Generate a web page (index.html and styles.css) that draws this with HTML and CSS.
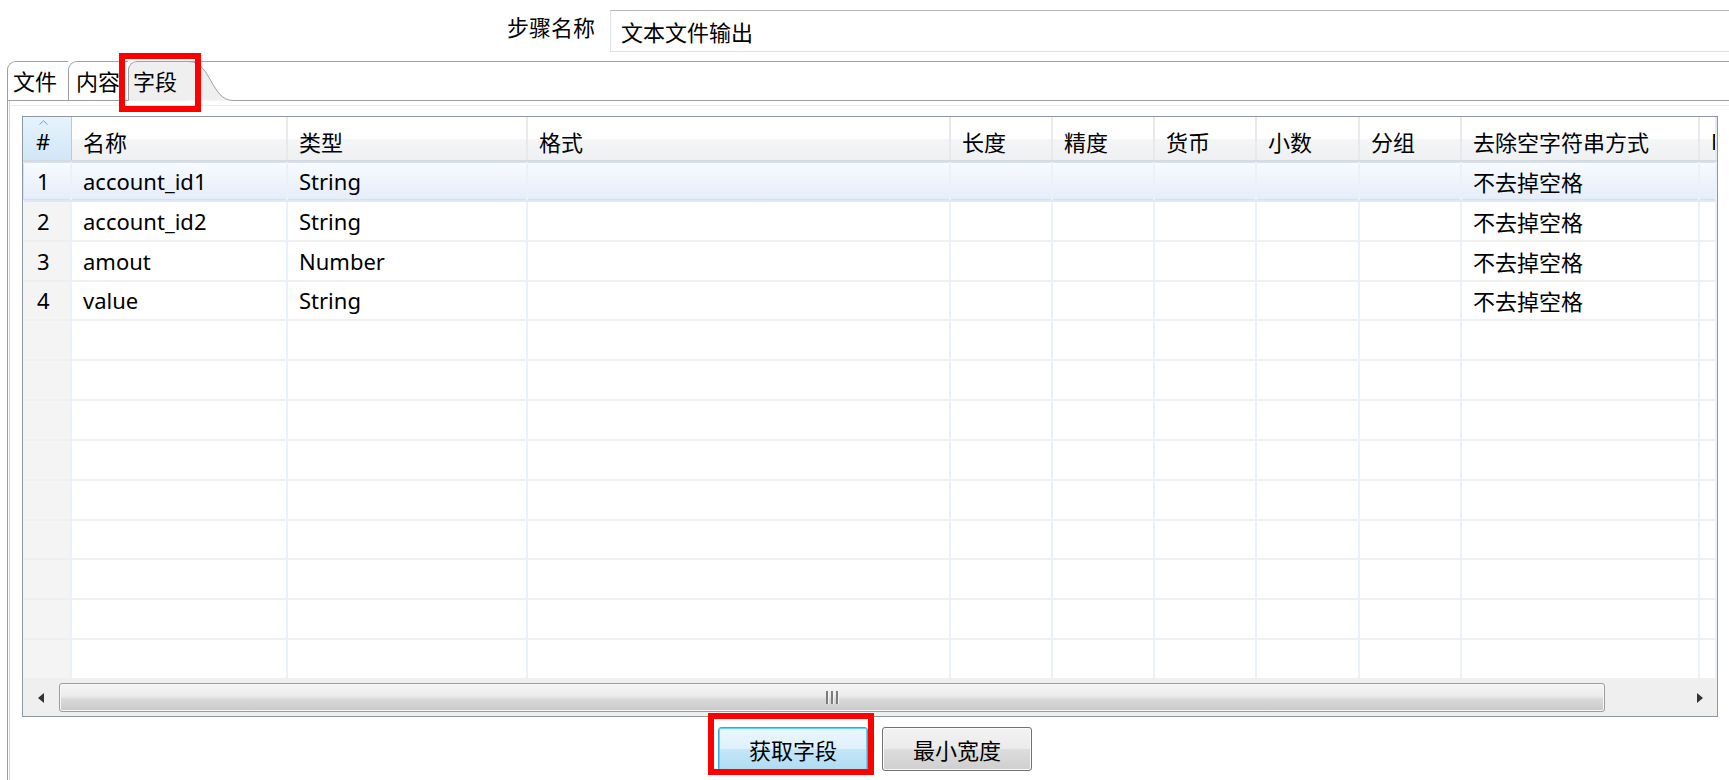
FILE: index.html
```html
<!DOCTYPE html>
<html lang="zh-CN">
<head>
    <meta charset="UTF-8">
    <meta name="viewport" content="width=device-width, initial-scale=1.0">
    <title>文本文件输出 - 字段</title>
    <link rel="stylesheet" href="styles.css">
</head>
<body>
    <div class="step-row">
        <label class="step-label" for="stepName">步骤名称</label>
        <input id="stepName" class="step-input" type="text" value="文本文件输出">
    </div>

    <div class="folder">
        <div class="tabs">
            <div class="tab tab-1">文件</div>
            <div class="tab tab-2">内容</div>
            <div class="tab tab-3 active mark">字段</div>
            <svg class="tab-curve" width="44" height="40" viewBox="0 0 44 40">
                <path d="M0 0.5 C22 0.5 22 39.5 44 39.5 L0 39.5 Z" fill="#efefef"/>
                <path d="M0 0.5 H44" stroke="#a0a0a0" fill="none"/>
                <path d="M0 0.5 C22 0.5 22 39.5 44 39.5" stroke="#a0a0a0" fill="none"/>
            </svg>
            <div class="tab-fill"></div>
        </div>

        <div class="pane">
            <div class="grid">
                <div class="row grid-head">
                    <div class="cell num">
                        <svg class="sort-arrow" width="9" height="5" viewBox="0 0 9 5"><path d="M0.5 4.5 L4.5 0.8 L8.5 4.5" fill="none" stroke="#7d9bb8"/></svg>
                        #
                    </div>
                    <div class="cell">名称</div>
                    <div class="cell">类型</div>
                    <div class="cell">格式</div>
                    <div class="cell">长度</div>
                    <div class="cell">精度</div>
                    <div class="cell">货币</div>
                    <div class="cell">小数</div>
                    <div class="cell">分组</div>
                    <div class="cell">去除空字符串方式</div>
                    <div class="cell">Null</div>
                </div>

                <div class="grid-body">
                    <div class="row sel">
                        <div class="cell num">1</div><div class="cell">account_id1</div><div class="cell">String</div><div class="cell"></div><div class="cell"></div><div class="cell"></div><div class="cell"></div><div class="cell"></div><div class="cell"></div><div class="cell">不去掉空格</div><div class="cell"></div>
                    </div>
                    <div class="row">
                        <div class="cell num">2</div><div class="cell">account_id2</div><div class="cell">String</div><div class="cell"></div><div class="cell"></div><div class="cell"></div><div class="cell"></div><div class="cell"></div><div class="cell"></div><div class="cell">不去掉空格</div><div class="cell"></div>
                    </div>
                    <div class="row">
                        <div class="cell num">3</div><div class="cell">amout</div><div class="cell">Number</div><div class="cell"></div><div class="cell"></div><div class="cell"></div><div class="cell"></div><div class="cell"></div><div class="cell"></div><div class="cell">不去掉空格</div><div class="cell"></div>
                    </div>
                    <div class="row">
                        <div class="cell num">4</div><div class="cell">value</div><div class="cell">String</div><div class="cell"></div><div class="cell"></div><div class="cell"></div><div class="cell"></div><div class="cell"></div><div class="cell"></div><div class="cell">不去掉空格</div><div class="cell"></div>
                    </div>
                    <div class="row"><div class="cell num"></div><div class="cell"></div><div class="cell"></div><div class="cell"></div><div class="cell"></div><div class="cell"></div><div class="cell"></div><div class="cell"></div><div class="cell"></div><div class="cell"></div><div class="cell"></div></div>
                    <div class="row"><div class="cell num"></div><div class="cell"></div><div class="cell"></div><div class="cell"></div><div class="cell"></div><div class="cell"></div><div class="cell"></div><div class="cell"></div><div class="cell"></div><div class="cell"></div><div class="cell"></div></div>
                    <div class="row"><div class="cell num"></div><div class="cell"></div><div class="cell"></div><div class="cell"></div><div class="cell"></div><div class="cell"></div><div class="cell"></div><div class="cell"></div><div class="cell"></div><div class="cell"></div><div class="cell"></div></div>
                    <div class="row"><div class="cell num"></div><div class="cell"></div><div class="cell"></div><div class="cell"></div><div class="cell"></div><div class="cell"></div><div class="cell"></div><div class="cell"></div><div class="cell"></div><div class="cell"></div><div class="cell"></div></div>
                    <div class="row"><div class="cell num"></div><div class="cell"></div><div class="cell"></div><div class="cell"></div><div class="cell"></div><div class="cell"></div><div class="cell"></div><div class="cell"></div><div class="cell"></div><div class="cell"></div><div class="cell"></div></div>
                    <div class="row"><div class="cell num"></div><div class="cell"></div><div class="cell"></div><div class="cell"></div><div class="cell"></div><div class="cell"></div><div class="cell"></div><div class="cell"></div><div class="cell"></div><div class="cell"></div><div class="cell"></div></div>
                    <div class="row"><div class="cell num"></div><div class="cell"></div><div class="cell"></div><div class="cell"></div><div class="cell"></div><div class="cell"></div><div class="cell"></div><div class="cell"></div><div class="cell"></div><div class="cell"></div><div class="cell"></div></div>
                    <div class="row"><div class="cell num"></div><div class="cell"></div><div class="cell"></div><div class="cell"></div><div class="cell"></div><div class="cell"></div><div class="cell"></div><div class="cell"></div><div class="cell"></div><div class="cell"></div><div class="cell"></div></div>
                    <div class="row"><div class="cell num"></div><div class="cell"></div><div class="cell"></div><div class="cell"></div><div class="cell"></div><div class="cell"></div><div class="cell"></div><div class="cell"></div><div class="cell"></div><div class="cell"></div><div class="cell"></div></div>
                </div>

                <div class="hscroll">
                    <div class="sb-btn"><span class="arrow-left"></span></div>
                    <div class="sb-thumb"><span class="grip"></span></div>
                    <div class="sb-track"></div>
                    <div class="sb-btn"><span class="arrow-right"></span></div>
                </div>
            </div>

            <div class="actions">
                <span class="mark mark-btn"><button class="btn focused">获取字段</button></span>
                <button class="btn">最小宽度</button>
            </div>
        </div>
    </div>
</body>
</html>
```

FILE: styles.css
```css
* {
    margin: 0;
    padding: 0;
    box-sizing: border-box;
}

body {
    width: 1729px;
    height: 780px;
    background: #fff;
    color: #000;
    font-family: "Noto Sans", "Noto Sans CJK SC", sans-serif;
    font-size: 22px;
    overflow: hidden;
}

/* step name row */
.step-row {
    display: grid;
    grid-template-columns: 595px 1fr;
    column-gap: 15px;
    padding-top: 10px;
}

.step-label {
    text-align: right;
    line-height: 34px;
}

.step-input {
    height: 42px;
    margin-right: -4px;
    padding: 0 10px;
    border: 1px solid #dde2e8;
    border-top-color: #b3b6bb;
    background: #fff;
    color: #000;
    font: inherit;
    outline: none;
}

/* tab folder */
.folder {
    margin: 9px 0 0 7px;
    height: 719px;
    display: flex;
    flex-direction: column;
}

.tabs {
    display: flex;
    height: 40px;
    flex: none;
}

.tab {
    position: relative;
    height: 40px;
    line-height: 38px;
    border: 1px solid #a0a0a0;
    border-right: none;
    border-top-left-radius: 9px;
    background: #fff;
    white-space: nowrap;
}

.tab-1 {
    width: 61px;
    padding-left: 5px;
}

.tab-2 {
    width: 60px;
    padding-left: 7px;
}

.tab-3 {
    width: 61px;
    padding-left: 4px;
    background: #efefef;
    border-bottom-color: #efefef;
}

.tab-curve {
    display: block;
    flex: none;
}

.tab-fill {
    flex: 1;
    border-top: 1px solid #a0a0a0;
    border-bottom: 1px solid #a0a0a0;
}

.pane {
    flex: 1;
    border-left: 1px solid #a0a0a0;
    box-shadow: inset 1px 0 #fff, inset 2px 0 #d4d4d4, inset 0 4px #fff, inset 0 5px #ebebeb;
    padding: 15px 11px 0 14px;
}

/* red annotation boxes */
.mark {
    position: relative;
}

.mark::after {
    content: "";
    position: absolute;
    border: 6px solid #ff0000;
    pointer-events: none;
}

.tab-3.mark::after {
    top: -9px;
    left: -10px;
    right: -12px;
    bottom: -12px;
}

.mark-btn {
    display: flex;
}

.mark-btn::after {
    top: -14px;
    left: -10px;
    right: -6px;
    bottom: -4px;
}

/* field grid */
.grid {
    height: 601px;
    border: 1px solid #8e98a4;
    display: flex;
    flex-direction: column;
    overflow: hidden;
}

.row {
    display: grid;
    grid-template-columns: 49px 216px 240px 423px 102px 102px 102px 103px 102px 238px 17px;
}

.cell {
    display: flex;
    align-items: center;
    padding-left: 11px;
    white-space: nowrap;
    overflow: hidden;
}

.grid-head {
    height: 45px;
    flex: none;
    background: linear-gradient(#fff 0, #fff 50%, #f4f5f7 50%, #eef0f2 100%);
    border-bottom: 2px solid #d8dadd;
}

.grid-head .cell {
    border-right: 2px solid #e7e9ec;
    padding-top: 4px;
}

.grid-head .num {
    position: relative;
    padding-left: 13px;
    background: linear-gradient(#e6f3fc, #d1e7f7);
    border-right: 1px solid #a9cfec;
}

.sort-arrow {
    position: absolute;
    top: 3px;
    left: 16px;
}

.grid-body {
    flex: 1;
    display: flex;
    flex-direction: column;
}

.grid-body .row {
    flex: 1;
    border-bottom: 2px solid #efefef;
}

.grid-body .cell {
    border-right: 2px solid #ebf1f9;
}

.grid-body .num {
    padding-left: 14px;
    background: #f4f4f4;
}

.grid-body .row.sel {
    background: linear-gradient(#f8fbff, #e4edf9);
    box-shadow: inset 0 0 0 1px #d2e2f4;
    border-bottom-color: #dfe8f4;
    border-radius: 2px;
}

.row.sel .num {
    background: transparent;
}

/* horizontal scrollbar */
.hscroll {
    height: 36px;
    flex: none;
    display: flex;
    background: #efefef;
}

.sb-btn {
    width: 36px;
    flex: none;
    display: flex;
    align-items: center;
    justify-content: center;
}

.sb-btn:last-child {
    width: 35px;
}

.arrow-left {
    border-right: 6px solid #333;
    border-top: 5px solid transparent;
    border-bottom: 5px solid transparent;
}

.arrow-right {
    border-left: 6px solid #333;
    border-top: 5px solid transparent;
    border-bottom: 5px solid transparent;
}

.sb-thumb {
    width: 1546px;
    flex: none;
    margin: 3px 0 4px;
    border: 1px solid #9c9c9c;
    border-radius: 3px;
    background: linear-gradient(#f5f5f5 0, #ececec 45%, #dadada 55%, #c9c9c9 100%);
    box-shadow: inset 0 0 0 1px #f8f8f8;
    display: flex;
    align-items: center;
    justify-content: center;
}

.grip {
    width: 13px;
    height: 13px;
    background: repeating-linear-gradient(90deg, #7c7c7c 0 2px, #f4f4f4 2px 3px, transparent 3px 5px);
}

.sb-track {
    flex: 1;
}

/* buttons */
.actions {
    display: flex;
    justify-content: center;
    gap: 14px;
    margin-top: 10px;
    padding-left: 10px;
}

.btn {
    width: 150px;
    height: 44px;
    border: 1px solid #707070;
    border-radius: 3px;
    background: linear-gradient(#f2f2f2 0, #ebebeb 50%, #dddddd 50%, #cfcfcf 100%);
    box-shadow: inset 0 0 0 1px #fbfbfb;
    color: #000;
    font: inherit;
}

.btn.focused {
    border-color: #3aa8dc;
    background: linear-gradient(#ecf7fd 0, #dcf1fc 50%, #c5e7f8 50%, #aedbf2 100%);
    box-shadow: inset 0 0 0 1px #5fd4fa;
}
```
